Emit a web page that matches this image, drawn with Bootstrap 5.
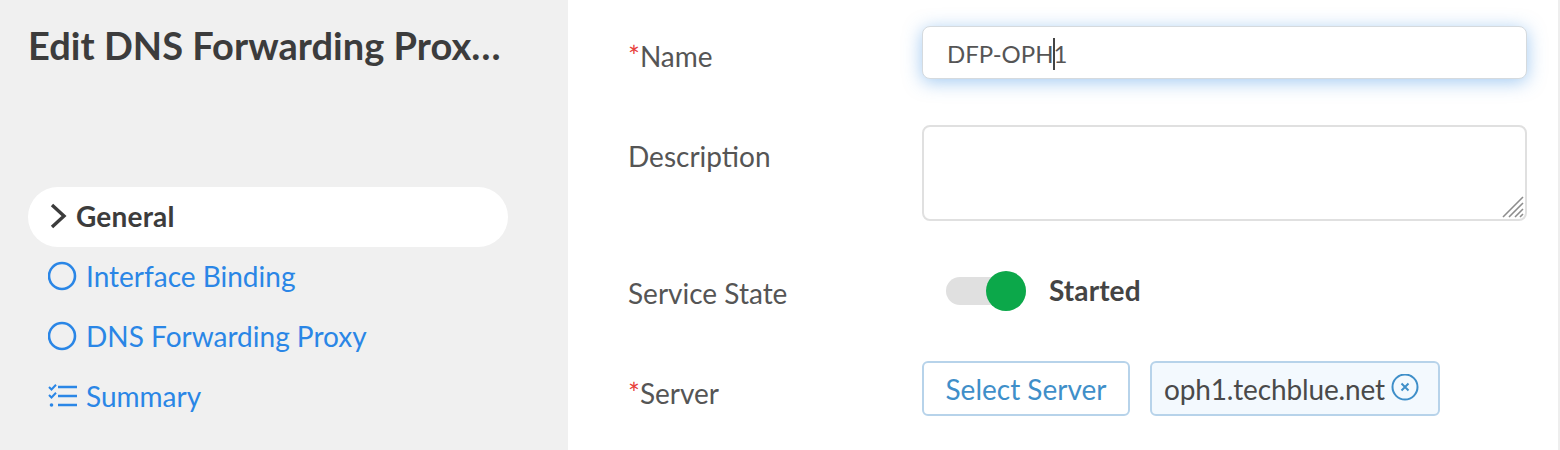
<!DOCTYPE html>
<html lang="en">
<head>
<meta charset="utf-8">
<title>Edit DNS Forwarding Proxy</title>
<link href="https://cdn.jsdelivr.net/npm/bootstrap@5.3.0/dist/css/bootstrap.min.css" rel="stylesheet">
<style>
html,body{height:450px;overflow:hidden}
body{font-family:Lato,"Liberation Sans",sans-serif;color:#444;background:#fff;font-size:28px}
.shell{height:450px}
.side{width:568px;background:#f0f0f0;padding:24px 60px 0 28px;flex:none}
.side-title{font-size:38px;font-weight:700;line-height:42px;color:#3c3c3c;margin:0 0 121px;white-space:nowrap;letter-spacing:.03px}
.step{height:60px;padding-left:20px;padding-bottom:2px;gap:8px;color:#2a86e6;font-size:28px;line-height:1;text-decoration:none}
.step svg{flex:none}
.step.on{background:#fff;border-radius:30px;color:#3c3c3c;font-weight:700;gap:5px;letter-spacing:.2px}
.main{flex:1;padding:26px 31px 0 60px;border-right:2px solid #eee}
.frow{display:flex}
.flabel{width:294px;flex:none;color:#555;margin:0}
.req{color:#e8403a}
.fctl{width:605px;flex:none}
.name-in{height:53px;border:1px solid #d5dade;border-radius:8px;background:#fff;box-shadow:0 3px 18px rgba(70,150,230,.5);padding:3px 0 0 24px;font-size:24px;color:#555}
.caret-bar{display:inline-block;width:2px;height:32px;background:#444;margin:0 -1px;vertical-align:-7px}
.desc-box{width:605px;height:96px}
.desc{display:block;width:100%;height:100%;border:2px solid #e0e0e0;border-radius:8px;box-shadow:none!important;padding:0;resize:none}
.grip{position:absolute;right:3px;bottom:3px}
.desc-wrap{margin-top:46px}
.state-row{margin-top:50px;height:40px}
.track{width:80px;height:28px;background:#e0e0e0;border-radius:14px;margin-left:24px}
.knob{width:40px;height:40px;border-radius:50%;background:#0ca84a;margin-left:auto;margin-top:-6px}
.state-txt{font-weight:700;font-size:28px;margin-left:23px;color:#444;line-height:40px;padding-bottom:2px;letter-spacing:.1px}
.srv-row{margin-top:50px}
.sel-btn{width:208px;height:55px;border:2px solid #b7d3ea;border-radius:6px;background:#fff;color:#3f8fc9;font-size:28px;line-height:1;padding:1px 0 0;--bs-btn-hover-color:#3f8fc9;--bs-btn-hover-bg:#fff;--bs-btn-hover-border-color:#b7d3ea}
.srv-tag{height:55px;width:290px;margin-left:20px;border:2px solid #b7d3ea;border-radius:6px;background:#f3f9fe;padding:1px 0 0 12px;gap:5px;color:#4a4a4a;font-size:28px;line-height:1;white-space:nowrap;letter-spacing:-.15px}
.lab-name{padding-top:9px}
.lab-desc{padding-top:10px}
.lab-state{padding-top:1px}
.lab-srv{padding-top:11px}
</style>
</head>
<body>
<div class="shell d-flex">
  <aside class="side">
    <h1 class="side-title">Edit DNS Forwarding Prox…</h1>
    <a class="step on d-flex align-items-center" href="#">
      <svg width="23" height="28" viewBox="0 0 23 28"><path d="M4 3l12 11L4 25" fill="none" stroke="#3c3c3c" stroke-width="3.4"/></svg>
      General</a>
    <a class="step d-flex align-items-center" href="#">
      <svg width="30" height="30" viewBox="0 0 30 30"><circle cx="14" cy="15" r="13" fill="none" stroke="#2a86e6" stroke-width="2.6"/></svg>
      Interface Binding</a>
    <a class="step d-flex align-items-center" href="#">
      <svg width="30" height="30" viewBox="0 0 30 30"><circle cx="14" cy="15" r="13" fill="none" stroke="#2a86e6" stroke-width="2.6"/></svg>
      DNS Forwarding Proxy</a>
    <a class="step d-flex align-items-center" href="#">
      <svg width="30" height="24" viewBox="0 0 30 24"><path d="M10 3h19M10 12h19M10 21h19" stroke="#2a86e6" stroke-width="2.6" fill="none"/><path d="M1 3l2.5 2.5L8 0.8M1 11l2.5 2.5L8 8.8" stroke="#2a86e6" stroke-width="2" fill="none"/><circle cx="3.5" cy="21" r="1.8" fill="#2a86e6"/></svg>
      Summary</a>
  </aside>
  <main class="main">
    <div class="frow">
      <label class="flabel lab-name"><span class="req">*</span>Name</label>
      <div class="fctl name-in d-flex align-items-center"><span>DFP-OPH<span class="caret-bar"></span>1</span></div>
    </div>
    <div class="frow desc-wrap">
      <label class="flabel lab-desc">Description</label>
      <div class="desc-box position-relative">
        <textarea class="form-control desc" aria-label="Description"></textarea>
        <svg class="grip" width="22" height="22" viewBox="0 0 22 22"><path d="M1 21L21 1M7 21L21 7M13 21l8-8M18 21l3-3" stroke="#8d8d8d" stroke-width="1.6" fill="none"/></svg>
      </div>
    </div>
    <div class="frow state-row">
      <label class="flabel lab-state">Service State</label>
      <div class="d-flex align-items-center">
        <div class="track"><div class="knob"></div></div>
        <span class="state-txt">Started</span>
      </div>
    </div>
    <div class="frow srv-row">
      <label class="flabel lab-srv"><span class="req">*</span>Server</label>
      <button type="button" class="btn sel-btn">Select Server</button>
      <div class="srv-tag d-flex align-items-center">oph1.techblue.net
        <svg width="30" height="30" viewBox="0 0 30 30"><circle cx="15" cy="13" r="12.5" fill="none" stroke="#3f8fc9" stroke-width="2"/><path d="M11.5 9.5l7 7M18.5 9.5l-7 7" stroke="#3f8fc9" stroke-width="2"/></svg>
      </div>
    </div>
  </main>
</div>
<script src="https://cdn.jsdelivr.net/npm/bootstrap@5.3.0/dist/js/bootstrap.bundle.min.js"></script>
</body>
</html>
